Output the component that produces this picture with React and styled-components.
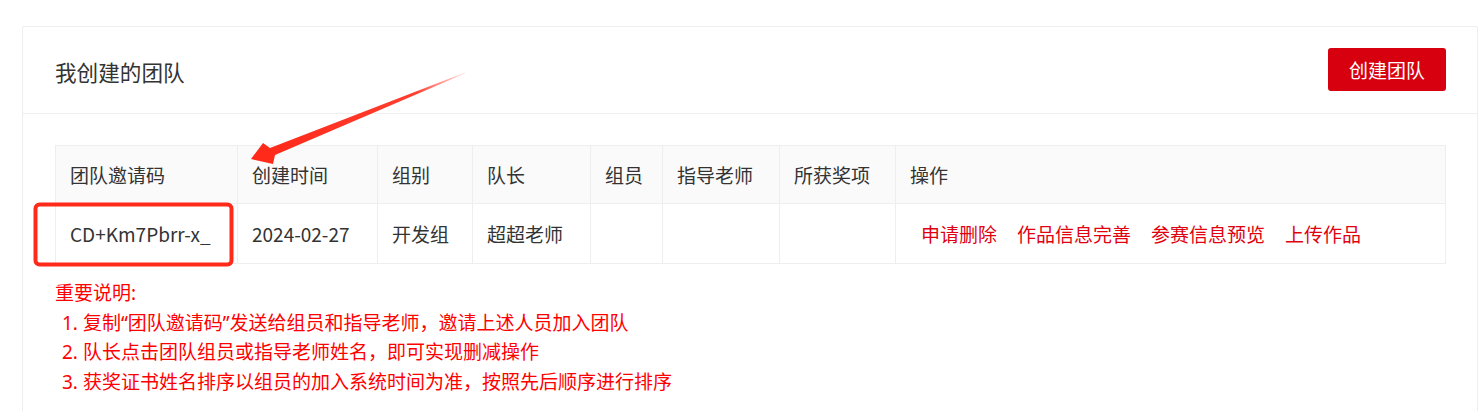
import React from 'react';
import styled, { createGlobalStyle } from 'styled-components';

const GlobalStyle = createGlobalStyle`
    html, body {
        margin: 0;
        padding: 0;
        background: #fff;
    }
    body {
        font-family: "Microsoft YaHei", "Noto Sans CJK SC", "Noto Sans", sans-serif;
        color: #333;
    }
`;

const columns = [
    { title: '团队邀请码', width: 182 },
    { title: '创建时间', width: 140 },
    { title: '组别', width: 95 },
    { title: '队长', width: 118 },
    { title: '组员', width: 72 },
    { title: '指导老师', width: 117 },
    { title: '所获奖项', width: 116 },
    { title: '操作' },
];

const teams = [
    {
        code: 'CD+Km7Pbrr-x_',
        created: '2024-02-27',
        group: '开发组',
        leader: '超超老师',
        members: '',
        teachers: '',
        awards: '',
    },
];

const actions = ['申请删除', '作品信息完善', '参赛信息预览', '上传作品'];

const notes = [
    '1. 复制“团队邀请码”发送给组员和指导老师，邀请上述人员加入团队',
    '2. 队长点击团队组员或指导老师姓名，即可实现删减操作',
    '3. 获奖证书姓名排序以组员的加入系统时间为准，按照先后顺序进行排序',
];

function Annotations() {
    return (
        <Overlay width="1482" height="411" viewBox="0 0 1482 411">
            <defs>
                <linearGradient id="tail" x1="465" y1="73" x2="270" y2="152" gradientUnits="userSpaceOnUse">
                    <stop offset="0" stopColor="#ff2a1a" stopOpacity="0.1" />
                    <stop offset="0.25" stopColor="#ff2a1a" stopOpacity="0.9" />
                    <stop offset="1" stopColor="#ff2a1a" />
                </linearGradient>
            </defs>
            <polygon
                points="251,159 263,143 270,148 465,72.5 465,73.5 275,155 273,164"
                fill="url(#tail)"
            />
            <rect x="35.5" y="204.5" width="196" height="60" rx="4" fill="none" stroke="#ff2a1a" strokeWidth="4" />
        </Overlay>
    );
}

class App extends React.Component {
    render() {
        return (
            <Page>
                <GlobalStyle />
                <Card>
                    <CardHeader>
                        <Title>我创建的团队</Title>
                        <PrimaryButton type="button">创建团队</PrimaryButton>
                    </CardHeader>

                    <CardBody>
                        <Table>
                            <colgroup>
                                {columns.map((c) => (
                                    <col key={c.title} style={c.width ? { width: c.width } : undefined} />
                                ))}
                            </colgroup>
                            <thead>
                                <tr>
                                    {columns.map((c) => (
                                        <Th key={c.title}>{c.title}</Th>
                                    ))}
                                </tr>
                            </thead>
                            <tbody>
                                {teams.map((t) => (
                                    <tr key={t.code}>
                                        <Td>{t.code}</Td>
                                        <Td>{t.created}</Td>
                                        <Td>{t.group}</Td>
                                        <Td>{t.leader}</Td>
                                        <Td>{t.members}</Td>
                                        <Td>{t.teachers}</Td>
                                        <Td>{t.awards}</Td>
                                        <Td $actions>
                                            {actions.map((a) => (
                                                <ActionLink key={a} href="#">{a}</ActionLink>
                                            ))}
                                        </Td>
                                    </tr>
                                ))}
                            </tbody>
                        </Table>

                        <Notes>
                            <NotesTitle>重要说明:</NotesTitle>
                            {notes.map((n) => (
                                <NoteItem key={n}>{n}</NoteItem>
                            ))}
                        </Notes>
                    </CardBody>
                </Card>
                <Annotations />
            </Page>
        );
    }
}

export default App;

const Page = styled.div`
    position: relative;
    height: 411px;
    overflow: hidden;
    padding: 26px 4px 0 22px;
    box-sizing: border-box;
`;

const Card = styled.div`
    border: 1px solid #eee;
    border-radius: 2px;
    background: #fff;
    min-height: 420px;
`;

const CardHeader = styled.div`
    height: 86px;
    display: flex;
    align-items: center;
    justify-content: space-between;
    padding: 0 31px 0 32px;
    border-bottom: 1px solid #eee;
`;

const Title = styled.h3`
    margin: 3px 0 0;
    font-size: 21.6px;
    font-weight: normal;
    color: #333;
    line-height: 30px;
`;

const PrimaryButton = styled.button`
    height: 43px;
    width: 118px;
    margin-top: -1px;
    border: none;
    border-radius: 3px;
    background: #d7000f;
    color: #fff;
    font-family: inherit;
    font-size: 19px;
    cursor: pointer;
`;

const CardBody = styled.div`
    padding: 31px 31px 0 32px;
`;

const Table = styled.table`
    width: 100%;
    table-layout: fixed;
    border-collapse: collapse;
    font-size: 19px;
    color: #333;
`;

const Th = styled.th`
    height: 57px;
    padding: 0 0 0 14px;
    text-align: left;
    font-weight: normal;
    background: #fafafa;
    border: 1px solid #eee;
    white-space: nowrap;
`;

const Td = styled.td`
    height: 59px;
    padding: ${(p) => (p.$actions ? '0 0 0 15px' : '0 0 0 14px')};
    border: 1px solid #eee;
    white-space: nowrap;
`;

const ActionLink = styled.a`
    margin: 0 10px;
    font-size: 19px;
    color: #e0000f;
    text-decoration: none;
`;

const Notes = styled.div`
    margin-top: 15px;
    font-family: "Noto Sans", "Noto Sans CJK SC", sans-serif;
    color: #ff0000;
    font-size: 19px;
    line-height: 29.5px;
`;

const NotesTitle = styled.div``;

const NoteItem = styled.div`
    padding-left: 7px;
`;

const Overlay = styled.svg`
    position: absolute;
    top: 0;
    left: 0;
    pointer-events: none;
`;
